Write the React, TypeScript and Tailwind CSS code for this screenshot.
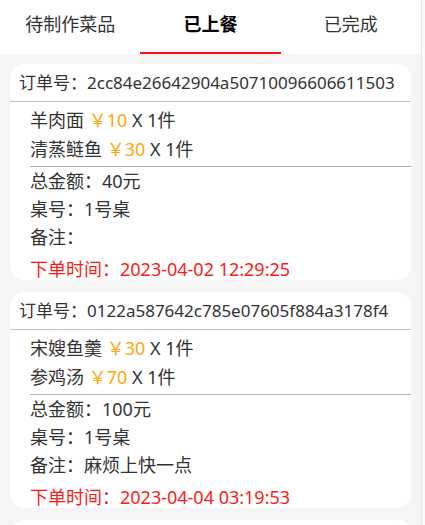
import { useState } from "react";

type Dish = { name: string; price: number; qty: number };
type Order = {
  id: string;
  dishes: Dish[];
  total: number;
  table: string;
  note: string;
  time: string;
};

const TABS = ["待制作菜品", "已上餐", "已完成"];

const ORDERS: Order[] = [
  {
    id: "2cc84e26642904a50710096606611503",
    dishes: [
      { name: "羊肉面", price: 10, qty: 1 },
      { name: "清蒸鲢鱼", price: 30, qty: 1 },
    ],
    total: 40,
    table: "1号桌",
    note: "",
    time: "2023-04-02 12:29:25",
  },
  {
    id: "0122a587642c785e07605f884a3178f4",
    dishes: [
      { name: "宋嫂鱼羹", price: 30, qty: 1 },
      { name: "参鸡汤", price: 70, qty: 1 },
    ],
    total: 100,
    table: "1号桌",
    note: "麻烦上快一点",
    time: "2023-04-04 03:19:53",
  },
  {
    id: "9f3a1c0b2e7d4a5c8b6e0d1f2a3b4c5d",
    dishes: [{ name: "羊肉面", price: 10, qty: 2 }],
    total: 20,
    table: "2号桌",
    note: "",
    time: "2023-04-05 11:02:17",
  },
];

function OrderCard({ order }: { order: Order }) {
  return (
    <div className="overflow-hidden rounded-[14px] bg-white">
      {/* order number */}
      <div className="flex h-[38px] items-center border-b border-[#c4c4c4] pl-[9px] text-[17px] text-[#333]">
        订单号：{order.id}
      </div>
      {/* dishes */}
      <div className="flex flex-col pb-[2px] pl-[20px] pt-[4px] text-[18px] text-[#333]">
        {order.dishes.map((d, i) => (
          <div key={i} className="flex h-[29px] items-center whitespace-pre">
            {d.name}{" "}
            <span className="text-[#ffa80a]">￥{d.price}</span> X {d.qty}件
          </div>
        ))}
      </div>
      {/* summary */}
      <div className="ml-[20px] flex flex-col border-t border-[#b0b0b0] text-[18px] text-[#333]">
        <div className="flex h-[28px] items-center">总金额：{order.total}元</div>
        <div className="flex h-[28px] items-center">桌号：{order.table}</div>
        <div className="flex h-[28px] items-center">备注：{order.note}</div>
        <div className="mt-[7px] flex h-[22px] items-center text-[#ff1a1a]">
          下单时间：{order.time}
        </div>
      </div>
    </div>
  );
}

export default function App() {
  const [tab, setTab] = useState(1);
  return (
    <div
      className="flex h-[525px] w-[425px] overflow-hidden bg-[#f5f5f5]"
      style={{ fontFamily: '"Noto Sans", "Noto Sans CJK SC", sans-serif' }}
    >
      <div className="flex min-w-0 flex-1 flex-col">
        {/* tabs */}
        <div className="flex h-[54px] bg-white">
          {TABS.map((t, i) => (
            <button
              key={t}
              type="button"
              onClick={() => setTab(i)}
              className={`flex flex-1 flex-col items-center ${
                tab === i ? "font-bold text-black" : "text-[#333]"
              }`}
            >
              <span className="flex h-[52px] items-center pb-[3px] text-[18px]">{t}</span>
              <span
                className={`h-[2px] w-full ${tab === i ? "bg-[#ff1010]" : "bg-transparent"}`}
              />
            </button>
          ))}
        </div>
        {/* orders */}
        <div className="flex flex-col gap-[12px] px-[10px] pt-[10px]">
          {ORDERS.map((o) => (
            <OrderCard key={o.id} order={o} />
          ))}
        </div>
      </div>
      {/* scrollbar track */}
      <div className="w-[4px] shrink-0 border-l border-[#e6e6e6] bg-[#fafafa]" />
    </div>
  );
}
